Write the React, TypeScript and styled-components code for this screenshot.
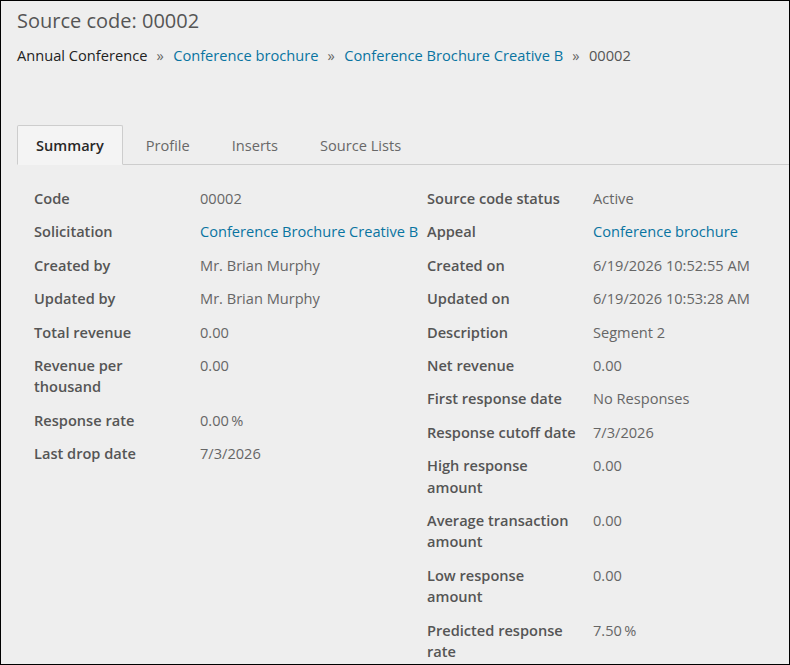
import React from "react";
import styled, { createGlobalStyle } from "styled-components";

const GlobalStyle = createGlobalStyle`
  html, body {
    margin: 0;
    padding: 0;
    background: #eeeeee;
  }
  body {
    font-family: "Open Sans", "Liberation Sans", sans-serif;
  }
`;

const Page = styled.div`
  box-sizing: border-box;
  width: 790px;
  height: 665px;
  overflow: hidden;
  border: 1px solid #000;
  background: #eeeeee;
  padding: 6px 0 0 16px;
`;

const Title = styled.h1`
  margin: 0;
  font-size: 20px;
  line-height: 28px;
  font-weight: 400;
  color: #555;
`;

const Breadcrumbs = styled.nav`
  display: flex;
  align-items: center;
  margin-top: 10px;
  font-size: 14.65px;
  line-height: 20px;
`;

const Crumb = styled.span<{ $link?: boolean; $current?: boolean }>`
  color: ${(p) => (p.$link ? "#0974a1" : p.$current ? "#555" : "#222")};
`;

const Sep = styled.span`
  color: #666;
  margin: 0 9.5px 0 9px;
`;

const TabBar = styled.div`
  display: flex;
  margin-top: 60px;
  border-bottom: 1px solid #cdcdcd;
`;

const Tab = styled.div<{ $active?: boolean }>`
  height: 38px;
  display: flex;
  align-items: center;
  padding: 0 18px;
  margin-right: 4px;
  margin-bottom: -1px;
  border: 1px solid ${(p) => (p.$active ? "#cdcdcd" : "transparent")};
  border-bottom-color: ${(p) => (p.$active ? "#f4f4f4" : "transparent")};
  border-radius: 2px 2px 0 0;
  background: ${(p) => (p.$active ? "#f4f4f4" : "transparent")};
  font-size: 14.6px;
  font-weight: ${(p) => (p.$active ? 600 : 400)};
  color: ${(p) => (p.$active ? "#282828" : "#686868")};
`;

const Fields = styled.div`
  display: grid;
  grid-template-columns: 393px 1fr;
  padding: 23px 0 0 17px;
`;

const Column = styled.div`
  display: flex;
  flex-direction: column;
  gap: 12px;
`;

const Row = styled.div`
  display: grid;
  grid-template-columns: 166px 1fr;
  font-size: 14.6px;
  line-height: 21.4px;
`;

const Label = styled.div`
  font-weight: 600;
  color: #555;
  padding-right: 10px;
`;

const Value = styled.div<{ $link?: boolean }>`
  color: ${(p) => (p.$link ? "#0974a1" : "#666")};
  white-space: nowrap;
`;

type TField = { label: string; value: string; link?: boolean };

const left: TField[] = [
  { label: "Code", value: "00002" },
  { label: "Solicitation", value: "Conference Brochure Creative B", link: true },
  { label: "Created by", value: "Mr. Brian Murphy" },
  { label: "Updated by", value: "Mr. Brian Murphy" },
  { label: "Total revenue", value: "0.00" },
  { label: "Revenue per thousand", value: "0.00" },
  { label: "Response rate", value: "0.00\u2009%" },
  { label: "Last drop date", value: "7/3/2026" },
];

const right: TField[] = [
  { label: "Source code status", value: "Active" },
  { label: "Appeal", value: "Conference brochure", link: true },
  { label: "Created on", value: "6/19/2026 10:52:55 AM" },
  { label: "Updated on", value: "6/19/2026 10:53:28 AM" },
  { label: "Description", value: "Segment 2" },
  { label: "Net revenue", value: "0.00" },
  { label: "First response date", value: "No Responses" },
  { label: "Response cutoff date", value: "7/3/2026" },
  { label: "High response amount", value: "0.00" },
  { label: "Average transaction amount", value: "0.00" },
  { label: "Low response amount", value: "0.00" },
  { label: "Predicted response rate", value: "7.50\u2009%" },
];

const FieldColumn: React.FC<{ fields: TField[] }> = ({ fields }) => (
  <Column>
    {fields.map((f) => (
      <Row key={f.label}>
        <Label>{f.label}</Label>
        <Value $link={f.link}>{f.value}</Value>
      </Row>
    ))}
  </Column>
);

const tabs = ["Summary", "Profile", "Inserts", "Source Lists"];

const App: React.FC = () => {
  return (
    <>
      <GlobalStyle />
      <Page>
        <Title>Source code: 00002</Title>
        <Breadcrumbs>
          <Crumb>Annual Conference</Crumb>
          <Sep>»</Sep>
          <Crumb $link>Conference brochure</Crumb>
          <Sep>»</Sep>
          <Crumb $link>Conference Brochure Creative B</Crumb>
          <Sep>»</Sep>
          <Crumb $current>00002</Crumb>
        </Breadcrumbs>
        <TabBar>
          {tabs.map((t, i) => (
            <Tab key={t} $active={i === 0}>
              {t}
            </Tab>
          ))}
        </TabBar>
        <Fields>
          <FieldColumn fields={left} />
          <FieldColumn fields={right} />
        </Fields>
      </Page>
    </>
  );
};

export default App;
